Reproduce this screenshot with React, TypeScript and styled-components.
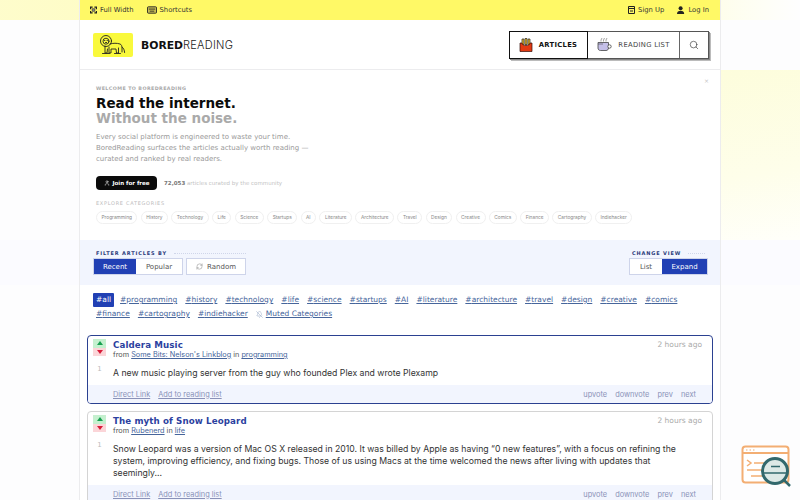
import React from 'react';
import styled, { createGlobalStyle } from 'styled-components';
import { RefreshCw, Search, User, BellOff } from 'lucide-react';

const GlobalStyle = createGlobalStyle`
  html, body { margin: 0; padding: 0; height: 500px; overflow: hidden; }
  body {
    font-family: "DejaVu Sans", sans-serif;
    background:
      linear-gradient(90deg, rgba(255,252,170,.6), rgba(255,252,170,.9) 60%, rgba(255,255,255,.6)) 0 0 / 100% 20px no-repeat,
      linear-gradient(170deg, #fdfddc, #fefeea 60%, #fffffa) 100% 70px / 80px 170px no-repeat,
      linear-gradient(#fbfbff, #fbfbff) 0 240px / 100% 45px no-repeat,
      #fdfdfe;
  }
  a { color: inherit; }
`;

const Page = styled.div`
  position: relative;
  height: 500px;
  overflow: hidden;
`;

const Column = styled.div`
  width: 640px;
  height: 500px;
  margin: 0 auto;
  background: #fff;
  box-shadow: 0 0 0 1px #ececee;
  overflow: hidden;
`;

const TopBar = styled.div`
  height: 20px;
  background: #fff966;
  display: flex;
  align-items: center;
  justify-content: space-between;
  padding: 0 11px 0 10px;
`;

const TopGroup = styled.div`
  display: flex;
  align-items: center;
  gap: 13px;
`;

const TopLink = styled.span`
  display: flex;
  align-items: center;
  gap: 3px;
  font-size: 6.8px;
  color: #333;
`;

const Header = styled.header`
  height: 49px;
  border-bottom: 1px solid #ececee;
  display: flex;
  align-items: center;
  justify-content: space-between;
  padding: 0 11px 0 13px;
`;

const Brand = styled.div`
  display: flex;
  align-items: center;
  gap: 8px;
`;

const LogoBox = styled.div`
  width: 40px;
  height: 24px;
  background: #f9f93c;
  border-radius: 2px;
  display: flex;
  align-items: center;
  justify-content: center;
`;

const BrandText = styled.div`
  font-family: Inter, sans-serif;
  font-size: 11px;
  font-weight: 300;
  letter-spacing: .25px;
  color: #222;
  b { font-family: "DejaVu Sans", sans-serif; font-size: 10.8px; font-weight: 700; letter-spacing: 0; color: #111; }
`;

const Nav = styled.nav`
  display: flex;
  height: 28px;
  box-sizing: border-box;
  border: 1px solid #555;
  box-shadow: 1px 1px 0 #888, 2px 2px 0 #bbb;
`;

const NavItem = styled.div<{ $active?: boolean; $w: number }>`
  width: ${({ $w }) => $w}px;
  box-sizing: border-box;
  display: flex;
  align-items: center;
  justify-content: center;
  gap: 6px;
  font-size: 6.8px;
  font-weight: ${({ $active }) => ($active ? 700 : 400)};
  letter-spacing: .3px;
  color: ${({ $active }) => ($active ? '#111' : '#444')};
  border-right: 1px solid #666;
  margin: ${({ $active }) => ($active ? '-1px 0 -1px -1px' : '0')};
  outline: ${({ $active }) => ($active ? '1px solid #111' : 'none')};
  outline-offset: -1px;
  &:last-child { border-right: 0; }
`;

const Hero = styled.section`
  position: relative;
  height: 170px;
  box-sizing: border-box;
  padding: 15px 16px 0;
`;

const Close = styled.span`
  position: absolute;
  top: 7px;
  right: 11px;
  font-size: 6px;
  color: #c4c4c4;
`;

const Eyebrow = styled.div`
  font-size: 4.8px;
  font-weight: 700;
  letter-spacing: .4px;
  color: #aaa;
  line-height: 7px;
`;

const Headline = styled.h1`
  margin: 4px 0 0;
  font-size: 13.5px;
  line-height: 15px;
  font-weight: 700;
  color: #0b0b0b;
  span { display: block; color: #aaa; }
`;

const Lead = styled.p`
  margin: 6px 0 0;
  font-size: 7px;
  line-height: 11px;
  color: #999;
  width: 225px;
`;

const CtaRow = styled.div`
  margin-top: 11px;
  display: flex;
  align-items: center;
  gap: 7px;
`;

const JoinButton = styled.button`
  width: 61px;
  height: 14px;
  padding: 0;
  border: 0;
  border-radius: 4px;
  background: #0b0b0b;
  color: #fff;
  font: 700 5.5px "DejaVu Sans", sans-serif;
  display: flex;
  align-items: center;
  justify-content: center;
  gap: 3px;
`;

const Stat = styled.div`
  font-size: 5.5px;
  color: #c4c4c4;
  b { color: #777; font-weight: 700; }
`;

const ExploreLabel = styled.div`
  margin-top: 10px;
  font-size: 5px;
  letter-spacing: .7px;
  color: #bbb;
  line-height: 7px;
`;

const Chips = styled.div`
  margin-top: 4px;
  display: flex;
  gap: 3.3px;
`;

const Chip = styled.span`
  height: 13px;
  box-sizing: border-box;
  padding: 0 4.5px;
  border: 1px solid #f0f0f0;
  border-radius: 7px;
  font-family: Inter, sans-serif;
  font-size: 4.8px;
  line-height: 11px;
  color: #888;
`;

const FilterPanel = styled.section`
  height: 45px;
  box-sizing: border-box;
  background: #f2f5fe;
  padding: 10px 13px 0 14px;
  display: flex;
  justify-content: space-between;
`;

const FilterLabel = styled.div`
  display: flex;
  align-items: center;
  gap: 7px;
  padding-left: 2px;
  font-size: 5px;
  line-height: 7px;
  font-weight: 700;
  letter-spacing: .85px;
  color: #2a3a7a;
`;

const LabelLine = styled.i<{ $w: number }>`
  width: ${({ $w }) => $w}px;
  border-top: 1px dotted #d0d6ea;
`;

const ButtonRow = styled.div`
  margin-top: 2px;
  display: flex;
  gap: 5px;
`;

const Segment = styled.div`
  display: flex;
  box-shadow: 0 0 0 1px #ced4ea;
`;

const FilterButton = styled.span<{ $active?: boolean; $w: number }>`
  width: ${({ $w }) => $w}px;
  height: 15px;
  display: flex;
  align-items: center;
  justify-content: center;
  gap: 4px;
  font-size: 7px;
  color: ${({ $active }) => ($active ? '#fff' : '#555')};
  background: ${({ $active }) => ($active ? '#2140b4' : '#fff')};
`;

const TagList = styled.div`
  padding: 8px 30px 0 16px;
  height: 50px;
  box-sizing: border-box;
  display: flex;
  flex-wrap: wrap;
  align-content: flex-start;
  gap: 0 8px;
  font-size: 7.5px;
  line-height: 14px;
`;

const Tag = styled.a<{ $active?: boolean }>`
  color: ${({ $active }) => ($active ? '#fff' : '#46659b')};
  background: ${({ $active }) => ($active ? '#2140b4' : 'transparent')};
  text-decoration: ${({ $active }) => ($active ? 'none' : 'underline')};
  padding: ${({ $active }) => ($active ? '0 3px' : '0')};
  margin: ${({ $active }) => ($active ? '0 -2px 0 -3px' : '0')};
  border-radius: 1px;
`;

const MutedTag = styled(Tag)`
  display: flex;
  align-items: center;
  gap: 3px;
`;

const Cards = styled.div`
  padding: 0 7px;
  display: flex;
  flex-direction: column;
  gap: 7px;
`;

const Card = styled.article<{ $selected?: boolean }>`
  flex: none;
  border: ${({ $selected }) => ($selected ? '1.5px solid #2b4191' : '1.5px solid #d4d4d4')};
  border-radius: 4px;
  background: #fff;
  overflow: hidden;
`;

const CardBody = styled.div`
  display: flex;
  padding: 3px 0 0 5px;
`;

const VoteColumn = styled.div`
  width: 13px;
  margin-right: 7px;
  flex: none;
`;

const VoteBox = styled.div<{ $down?: boolean }>`
  height: 8.5px;
  background: ${({ $down }) => ($down ? '#fbd5d8' : '#c5f0cf')};
  display: flex;
  align-items: center;
  justify-content: center;
`;

const VoteCount = styled.div`
  margin-top: 9px;
  text-align: center;
  font-size: 7px;
  color: #bbb;
`;

const CardMain = styled.div`
  flex: 1;
  min-width: 0;
  padding-right: 10px;
`;

const TitleRow = styled.div`
  display: flex;
  justify-content: space-between;
`;

const Title = styled.h2`
  margin: 0;
  font-size: 8.7px;
  line-height: 12px;
  font-weight: 700;
  letter-spacing: .1px;
  color: #2b41a0;
`;

const Time = styled.span`
  font-size: 7.5px;
  line-height: 11px;
  color: #aaa;
`;

const Source = styled.div`
  font-family: Inter, sans-serif;
  font-size: 7.3px;
  line-height: 9px;
  margin-top: -1px;
  color: #555;
  a { color: #46659b; }
`;

const Excerpt = styled.p`
  margin: 8px 0 0;
  padding-right: 14px;
  font-family: Inter, sans-serif;
  font-size: 8.7px;
  line-height: 12px;
  color: #333;
`;

const CardFooter = styled.div`
  margin-top: 6px;
  height: 18px;
  background: #f2f5fe;
  display: flex;
  justify-content: space-between;
  align-items: center;
  padding: 0 16px 0 25px;
  font-family: Inter, sans-serif;
  font-size: 7.4px;
  color: #8a92b8;
`;

const FooterGroup = styled.div`
  display: flex;
  gap: 8px;
`;

const Floating = styled.div`
  position: absolute;
  left: 741px;
  top: 445px;
`;

const categories = ['programming', 'history', 'technology', 'life', 'science', 'startups', 'AI', 'literature', 'architecture', 'travel', 'design', 'creative', 'comics', 'finance', 'cartography', 'indiehacker'];
const chipNames = ['Programming', 'History', 'Technology', 'Life', 'Science', 'Startups', 'AI', 'Literature', 'Architecture', 'Travel', 'Design', 'Creative', 'Comics', 'Finance', 'Cartography', 'Indiehacker'];

const articles = [
  { title: 'Caldera Music', source: "Some Bits: Nelson's Linkblog", category: 'programming', selected: true,
    text: 'A new music playing server from the guy who founded Plex and wrote Plexamp' },
  { title: 'The myth of Snow Leopard', source: 'Rubenerd', category: 'life', selected: false,
    text: 'Snow Leopard was a version of Mac OS X released in 2010. It was billed by Apple as having “0 new features”, with a focus on refining the system, improving efficiency, and fixing bugs. Those of us using Macs at the time welcomed the news after living with updates that seemingly...' },
];

const FullWidthIcon = () => (
  <svg width="7" height="8" viewBox="0 0 8 8" fill="none" stroke="#222" strokeWidth="1.4">
    <path d="M.7 3V.7H3M5 .7h2.3V3M7.3 5v2.3H5M3 7.300H.7V5" />
    <path d="M2.500 2.500h3v3h-3z" strokeWidth=".6" fill="#888" />
  </svg>
);

const KeyboardIcon = () => (
  <svg width="10" height="8" viewBox="0 0 11 8">
    <rect x=".5" y=".5" width="10" height="7" rx="1" fill="#c9bf55" stroke="#222" />
    <path d="M2 3h7M3 5.300h5" stroke="#222" strokeWidth=".9" />
  </svg>
);

const SaveIcon = () => (
  <svg width="7" height="8" viewBox="0 0 7 8" fill="none" stroke="#222">
    <path d="M.5.5h6v7h-6z" />
    <path d="M.5 2.500h6M2 5h3" />
  </svg>
);

const PersonIcon = () => (
  <svg width="8" height="8" viewBox="0 0 8 8" fill="#222">
    <circle cx="3.600" cy="2.200" r="2" />
    <path d="M0 8c0-2.400 1.500-3.200 3.600-3.200S7.200 5.600 7.200 8z" />
  </svg>
);

const LionIcon = () => (
  <svg width="28" height="22" viewBox="0 0 28 22" fill="none" stroke="#222" strokeWidth=".9" strokeLinecap="round" strokeLinejoin="round">
    <circle cx="7" cy="7" r="5.500" />
    <circle cx="7" cy="7.200" r="3" />
    <path d="M5.500 6.500h.4M8 6.500h.4M6.500 8.500h1.200" />
    <path d="M11 10c3-1 7-1 10 0 1.500.6 2 2 2 4v4" />
    <path d="M23 13c1.500 1 2.500 3 2.600 5.500" />
    <path d="M6 12v7h2l.5-4M10 13v6h2v-4h5l.5 4h2v-5" />
    <path d="M3.500 19.500h7M15.500 19.500h6" />
  </svg>
);

const FriesIcon = () => (
  <svg width="14" height="14" viewBox="0 0 14 14">
    <path d="M3 1h2v6H3zM6 .5h2v6H6zM9 1h2v6H9z" fill="#f2c230" stroke="#222" strokeWidth=".7" />
    <path d="M1 5h2c.5 2 1.500 2.500 4 2.500S10.500 7 11 5h2v8.500H1z" fill="#e23a12" stroke="#33100a" strokeWidth=".7" />
  </svg>
);

const CupIcon = () => (
  <svg width="15" height="15" viewBox="0 0 15 15" fill="none">
    <path d="M4 4.500V3c0-1 1-1 1-2M6.500 4.500V3c0-1 1-1 1-2M9 4.500V3c0-1 1-1 1-2" stroke="#666" strokeWidth=".6" />
    <path d="M1 5.500h10.500V11c0 1.500-1 2.500-2.500 2.500H3.500C2 13.500 1 12.500 1 11z" fill="#c4bfe8" stroke="#444" strokeWidth=".8" />
    <path d="M1 7h5" stroke="#444" strokeWidth=".6" />
    <circle cx="12.500" cy="9.500" r="1.700" fill="#fff" stroke="#444" strokeWidth=".8" />
  </svg>
);

const Arrow = ({ down }: { down?: boolean }) => (
  <svg width="6" height="4" viewBox="0 0 6 4">
    <path d={down ? 'M0 0h6L3 4z' : 'M0 4h6L3 0z'} fill={down ? '#d81b38' : '#17a050'} />
  </svg>
);

const InspectorIcon = () => (
  <svg width="50" height="44" viewBox="0 0 50 44" fill="none">
    <rect x="1.500" y="1.500" width="46" height="36" rx="3" fill="#fff" stroke="#f3ae73" strokeWidth="2" />
    <path d="M1.500 8h46" stroke="#f3ae73" strokeWidth="2" />
    <path d="M5 5h1.500M8.500 5H10M12 5h1.500" stroke="#f3ae73" />
    <path d="M6 15l4 3-4 3" stroke="#f3ae73" strokeWidth="1.500" />
    <path d="M13 18h14M6 25h18M10 31h14" stroke="#f3ae73" strokeWidth="1.500" />
    <circle cx="34" cy="26" r="12.500" fill="#dde9e6" stroke="#32686c" strokeWidth="3" />
    <path d="M30 21.500h9M22 28h24" stroke="#32686c" strokeWidth="1.500" />
    <path d="M43 35l6 6" stroke="#32686c" strokeWidth="2.500" />
  </svg>
);

export default function App() {
  return (
    <Page>
      <GlobalStyle />
      <Column>
        <TopBar>
          <TopGroup>
            <TopLink><FullWidthIcon />Full Width</TopLink>
            <TopLink><KeyboardIcon />Shortcuts</TopLink>
          </TopGroup>
          <TopGroup>
            <TopLink><SaveIcon />Sign Up</TopLink>
            <TopLink><PersonIcon />Log In</TopLink>
          </TopGroup>
        </TopBar>

        <Header>
          <Brand>
            <LogoBox><LionIcon /></LogoBox>
            <BrandText><b>BORED</b>READING</BrandText>
          </Brand>
          <Nav>
            <NavItem $active $w={79}><FriesIcon />ARTICLES</NavItem>
            <NavItem $w={92}><CupIcon />READING LIST</NavItem>
            <NavItem $w={28}><Search size={10} strokeWidth={1.5} color="#333" /></NavItem>
          </Nav>
        </Header>

        <Hero>
          <Close>×</Close>
          <Eyebrow>WELCOME TO BOREDREADING</Eyebrow>
          <Headline>Read the internet.<span>Without the noise.</span></Headline>
          <Lead>Every social platform is engineered to waste your time. BoredReading surfaces the articles actually worth reading — curated and ranked by real readers.</Lead>
          <CtaRow>
            <JoinButton><User size={6} strokeWidth={2} />Join for free</JoinButton>
            <Stat><b>72,053</b> articles curated by the community</Stat>
          </CtaRow>
          <ExploreLabel>EXPLORE CATEGORIES</ExploreLabel>
          <Chips>
            {chipNames.map((name) => <Chip key={name}>{name}</Chip>)}
          </Chips>
        </Hero>

        <FilterPanel>
          <div>
            <FilterLabel>FILTER ARTICLES BY<LabelLine $w={72} /></FilterLabel>
            <ButtonRow>
              <Segment>
                <FilterButton $active $w={42}>Recent</FilterButton>
                <FilterButton $w={46}>Popular</FilterButton>
              </Segment>
              <Segment>
                <FilterButton $w={58}><RefreshCw size={7} strokeWidth={1.2} />Random</FilterButton>
              </Segment>
            </ButtonRow>
          </div>
          <div>
            <FilterLabel>CHANGE VIEW<LabelLine $w={17} /></FilterLabel>
            <ButtonRow>
              <Segment>
                <FilterButton $w={32}>List</FilterButton>
                <FilterButton $active $w={45}>Expand</FilterButton>
              </Segment>
            </ButtonRow>
          </div>
        </FilterPanel>

        <TagList>
          <Tag $active>#all</Tag>
          {categories.map((name) => <Tag key={name}>#{name}</Tag>)}
          <MutedTag><BellOff size={7} strokeWidth={1} />Muted Categories</MutedTag>
        </TagList>

        <Cards>
          {articles.map((article) => (
            <Card key={article.title} $selected={article.selected}>
              <CardBody>
                <VoteColumn>
                  <VoteBox><Arrow /></VoteBox>
                  <VoteBox $down><Arrow down /></VoteBox>
                  <VoteCount>1</VoteCount>
                </VoteColumn>
                <CardMain>
                  <TitleRow>
                    <Title>{article.title}</Title>
                    <Time>2 hours ago</Time>
                  </TitleRow>
                  <Source>from <a href="#">{article.source}</a> in <a href="#">{article.category}</a></Source>
                  <Excerpt>{article.text}</Excerpt>
                </CardMain>
              </CardBody>
              <CardFooter>
                <FooterGroup>
                  <a href="#">Direct Link</a>
                  <a href="#">Add to reading list</a>
                </FooterGroup>
                <FooterGroup>
                  <span>upvote</span>
                  <span>downvote</span>
                  <span>prev</span>
                  <span>next</span>
                </FooterGroup>
              </CardFooter>
            </Card>
          ))}
        </Cards>
      </Column>
      <Floating><InspectorIcon /></Floating>
    </Page>
  );
}
